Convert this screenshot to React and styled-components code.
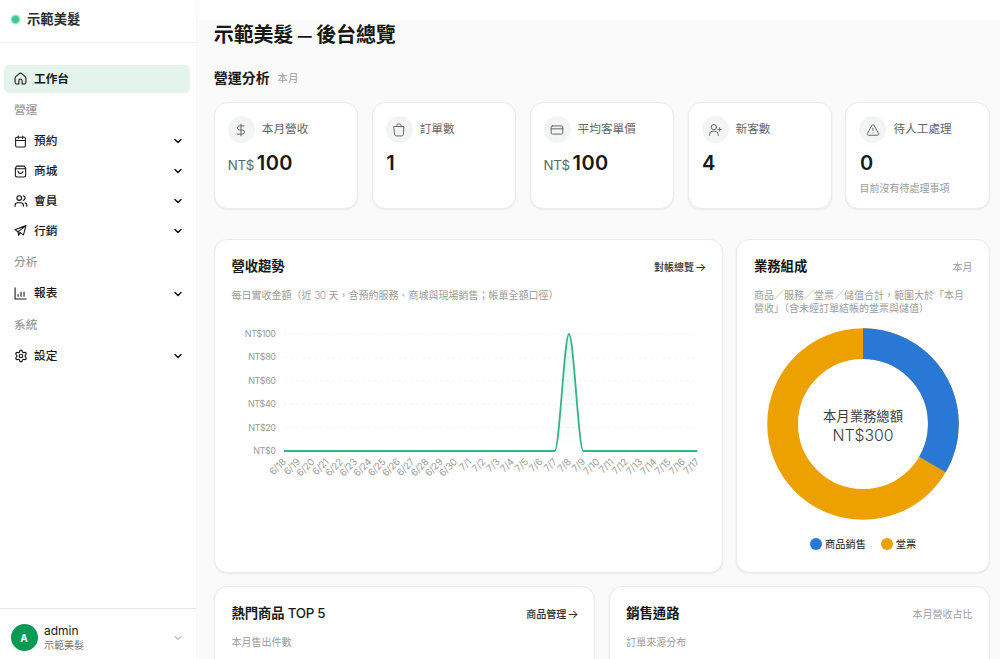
import React from "react";
import styled, { createGlobalStyle } from "styled-components";
import {
  Calendar,
  Users,
  Settings,
  ChevronDown,
  DollarSign,
  CreditCard,
  TriangleAlert,
} from "lucide-react";

const GlobalStyle = createGlobalStyle`
  *, *::before, *::after { box-sizing: border-box; }
  body {
    margin: 0;
    background: #fafafa;
    color: #161817;
    font-family: Inter, "Noto Sans CJK TC", sans-serif;
    font-size: 11.67px;
    line-height: 1.4;
    overflow: hidden;
  }
`;

const Shell = styled.div`
  display: flex;
  height: 659px;
  overflow: hidden;
`;

/* Sidebar */
const Sidebar = styled.aside`
  display: flex;
  flex-direction: column;
  flex: 0 0 197px;
  background: #fff;
  border-right: 1px solid #f8f8f8;
`;

const Brand = styled.div`
  display: flex;
  align-items: center;
  gap: 7px;
  height: 43px;
  padding: 0 0 4px 11px;
  border-bottom: 1px solid #f1f1f1;
  font-size: 13.33px;
  font-weight: 700;
  color: #2a2c2b;
`;

const StatusDot = styled.span`
  width: 9px;
  height: 9px;
  border-radius: 50%;
  background: #41c793;
  border: 1px solid #8be0bd;
  box-shadow: 0 0 0 1.5px #e2f8ee;
`;

const Nav = styled.nav`
  display: flex;
  flex: 1;
  flex-direction: column;
  gap: 1.67px;
  padding: 21.6px 6px 0 4px;
`;

const NavItem = styled.div`
  display: flex;
  align-items: center;
  gap: 7px;
  height: 28.2px;
  padding: 0 6px 0 10px;
  border-radius: 5px;
  background: ${(p) => (p.$active ? "#e4f4ec" : "transparent")};
  font-weight: ${(p) => (p.$active ? 700 : 500)};

  svg {
    flex: none;
  }
`;

const NavIcon = styled.span`
  display: flex;
  align-items: center;
  justify-content: center;
  width: 13px;
`;

const NavLabel = styled.span`
  flex: 1;
`;

const NavGroup = styled.div`
  display: flex;
  align-items: center;
  height: 31.2px;
  padding-left: 10px;
  color: #9a9c9b;
  font-weight: 500;
`;

const Account = styled.div`
  display: flex;
  align-items: center;
  gap: 6.5px;
  height: 51px;
  padding: 7px 12px 0 10.5px;
  border-top: 1px solid #e8e8e8;
`;

const Avatar = styled.span`
  display: grid;
  place-items: center;
  width: 27px;
  height: 27px;
  border-radius: 50%;
  background: #079a55;
  color: #fff;
  font-size: 10px;
  font-weight: 700;
`;

const AccountText = styled.div`
  flex: 1;
  display: flex;
  flex-direction: column;
  line-height: 14px;
  font-size: 12px;

  small {
    font-size: 10px;
    color: #737573;
  }
`;

/* Main column */
const Main = styled.main`
  flex: 1;
  display: flex;
  flex-direction: column;
  min-width: 0;
`;

const TopStrip = styled.div`
  flex: 0 0 20px;
  background: #fff;
`;

const Content = styled.div`
  display: flex;
  flex-direction: column;
  padding: 0 10px 0 16.8px;
`;

const PageTitle = styled.h1`
  margin: 0;
  height: 30px;
  line-height: 30px;
  font-size: 20px;
  font-weight: 700;
  letter-spacing: -0.15px;
`;

const Dash = styled.span`
  font-size: 14px;
  vertical-align: 1px;
`;

const SectionHead = styled.div`
  display: flex;
  align-items: center;
  gap: 7.5px;
  height: 20px;
  margin: 18px 0 14px;

  h2 {
    margin: 0;
    font-size: 14px;
    font-weight: 700;
  }
  span {
    color: #9a9c9b;
    font-size: 10.6px;
    padding-top: 2px;
  }
`;

const Card = styled.section`
  background: #fff;
  border: 1px solid #ebebeb;
  border-radius: 13.33px;
  box-shadow: 0 1px 2px rgba(0, 0, 0, 0.07);
`;

const StatGrid = styled.div`
  display: grid;
  grid-template-columns: repeat(5, 1fr);
  gap: 13.33px;
`;

const StatCard = styled(Card)`
  height: 107px;
  padding: 13px 13px 0;
`;

const StatHead = styled.div`
  display: flex;
  align-items: center;
  gap: 7px;
  height: 27px;
  color: #646665;
`;

const IconBubble = styled.span`
  display: grid;
  place-items: center;
  width: 27px;
  height: 27px;
  border-radius: 50%;
  background: #f3f5f4;
`;

const StatValue = styled.div`
  display: flex;
  align-items: baseline;
  gap: 2.5px;
  height: 28px;
  margin-top: 6px;
  line-height: 28px;
  font-size: 20px;
  font-weight: 600;
  letter-spacing: 0.4px;
  text-indent: 0.5px;

  small {
    color: #646665;
    font-size: 13.33px;
    font-weight: 400;
    letter-spacing: -0.4px;
    text-indent: 0;
  }
`;

const StatNote = styled.div`
  margin-top: 4px;
  color: #9a9c9b;
  font-size: 10px;
  line-height: 14px;
`;

const PanelGrid = styled.div`
  display: grid;
  grid-template-columns: ${(p) => p.$columns};
  gap: 13.33px;
  margin-top: ${(p) => p.$top}px;
`;

const Panel = styled(Card)`
  height: ${(p) => p.$height}px;
  padding: 15px 16.6px 0;
`;

const PanelHead = styled.div`
  display: flex;
  align-items: center;
  justify-content: space-between;
  height: 22px;

  h3 {
    margin: 0;
    font-size: 13.33px;
    font-weight: 700;
  }
`;

const Latin = styled.span`
  font-weight: 500;
  letter-spacing: -0.3px;
`;

const PanelLink = styled.a`
  display: flex;
  align-items: center;
  gap: 1px;
  margin-right: -1px;
  padding-top: 2px;
  color: #2c2e2d;
  font-size: 10px;
  font-weight: 500;
  line-height: 14px;
  white-space: nowrap;

  span {
    font-size: 12px;
    font-weight: 400;
  }
`;

const PanelTag = styled.span`
  padding-top: 2px;
  color: #9a9c9b;
  font-size: 10px;
`;

const PanelText = styled.p`
  margin: 11.67px 0 0;
  color: #9a9c9b;
  font-size: 10px;
  line-height: 13.33px;
`;

const Digits = styled.span`
  letter-spacing: -0.4px;
  font-weight: 300;
`;

const TrendSvg = styled.svg`
  display: block;
  margin-top: 20px;
  width: 474px;
  height: 170px;
  overflow: visible;
  font-size: 9px;
  letter-spacing: -0.45px;
  fill: #9a9c9b;
`;

const DayLabel = styled.text`
  font-size: 9.6px;
  letter-spacing: -0.2px;
`;

const DonutSvg = styled.svg`
  display: block;
  margin: 12px auto 0;
  width: 192px;
  height: 194px;
`;

const Legend = styled.div`
  display: flex;
  justify-content: center;
  gap: 15px;
  margin-top: 15px;
  font-size: 10.2px;
  line-height: 16px;
`;

const LegendItem = styled.span`
  display: flex;
  align-items: center;
  gap: 3px;

  &::before {
    content: "";
    width: 12px;
    height: 12px;
    border-radius: 50%;
    background: ${(p) => p.$color};
  }
`;

/* Icons */
const Stroke = ({ size = 13, width = 2, children }) => (
  <svg
    width={size}
    height={size}
    viewBox="0 0 24 24"
    fill="none"
    stroke="currentColor"
    strokeWidth={width}
    strokeLinecap="round"
    strokeLinejoin="round"
  >
    {children}
  </svg>
);

const HomeIcon = () => (
  <Stroke>
    <path d="M9 22H5a3 3 0 0 1-3-3v-7.600a4 4 0 0 1 1.400-3l6.300-5.400a3.600 3.600 0 0 1 4.600 0l6.300 5.400a4 4 0 0 1 1.400 3V19a3 3 0 0 1-3 3h-4v-6a3 3 0 0 0-6 0z" />
  </Stroke>
);

const StoreBagIcon = () => (
  <Stroke>
    <path d="M5 2h14l2.500 4v13a3 3 0 0 1-3 3h-13a3 3 0 0 1-3-3V6z" />
    <path d="M2.500 7h19" />
    <path d="M7.500 11.500c.5 5.300 8.500 5.300 9 0" />
  </Stroke>
);

const PlaneIcon = () => (
  <Stroke>
    <path d="M22 3 2 10.500l5.500 4L22 3l-4.500 17-7-4.500" />
    <path d="m7.500 14.500 1 6.500 3-5" />
  </Stroke>
);

const ReportIcon = () => (
  <Stroke>
    <path d="M2 1.500V22h20.500" />
    <path d="M7.500 17v-3M13 17V9.500M18.500 17V9.500" />
  </Stroke>
);

const BagIcon = () => (
  <Stroke size={14} width={1.7}>
    <path d="M3.500 6h17l-1 13.500a3 3 0 0 1-3 2.700h-9a3 3 0 0 1-3-2.700z" />
    <path d="M8.500 6V4a2.200 2.200 0 0 1 2.200-2.200h2.600A2.200 2.200 0 0 1 15.500 4v2" />
  </Stroke>
);

const NewClientIcon = () => (
  <Stroke size={14} width={1.7}>
    <circle cx="10" cy="7" r="4.500" />
    <path d="M2.500 21.500v-1.500a6 6 0 0 1 6-6h3a6 6 0 0 1 6 6v1.500" />
    <path d="M20 8v6M17 11h6" />
  </Stroke>
);

/* Data */
const NAV = [
  { label: "工作台", icon: <HomeIcon />, active: true },
  { group: "營運" },
  { label: "預約", icon: <Calendar size={13} /> },
  { label: "商城", icon: <StoreBagIcon /> },
  { label: "會員", icon: <Users size={14} /> },
  { label: "行銷", icon: <PlaneIcon /> },
  { group: "分析" },
  { label: "報表", icon: <ReportIcon /> },
  { group: "系統" },
  { label: "設定", icon: <Settings size={14} /> },
];

const STATS = [
  { label: "本月營收", unit: "NT$", value: "100", icon: <DollarSign size={14} strokeWidth={1.7} /> },
  { label: "訂單數", value: "1", icon: <BagIcon /> },
  { label: "平均客單價", unit: "NT$", value: "100", icon: <CreditCard size={14} strokeWidth={1.7} /> },
  { label: "新客數", value: "4", icon: <NewClientIcon /> },
  { label: "待人工處理", value: "0", note: "目前沒有待處理事項", icon: <TriangleAlert size={14} strokeWidth={1.7} /> },
];

const DAYS = [
  ...Array.from({ length: 13 }, (_, i) => `6/${18 + i}`),
  ...Array.from({ length: 17 }, (_, i) => `7/${1 + i}`),
];

const X0 = 53;
const STEP = 14.25;
const TOP = 12;
const BASE = 129;
const xAt = (i) => X0 + i * STEP;

function TrendChart() {
  const peak = `M${xAt(19)} ${BASE}C${xAt(19) + 4.75} ${BASE} ${xAt(20) - 4.75} ${TOP} ${xAt(20)} ${TOP}S${xAt(21) - 4.75} ${BASE} ${xAt(21)} ${BASE}`;
  return (
    <TrendSvg viewBox="0 0 474 170">
      <defs>
        <linearGradient id="trend" x1="0" x2="0" y1="0" y2="1">
          <stop offset="0" stopColor="#1baf7a" stopOpacity="0.12" />
          <stop offset="1" stopColor="#1baf7a" stopOpacity="0" />
        </linearGradient>
      </defs>
      {[100, 80, 60, 40, 20, 0].map((v, i) => {
        const y = TOP + i * 23.4;
        return (
          <g key={v}>
            <text x="44.500" y={y + 3} textAnchor="end">
              {`NT$${v}`}
            </text>
            {v > 0 && (
              <line x1={X0} x2={xAt(29)} y1={y} y2={y} stroke="#f4f4f4" strokeDasharray="3 3" />
            )}
          </g>
        );
      })}
      <path d={peak} fill="url(#trend)" />
      <path
        d={`M${X0} ${BASE}H${xAt(19)}${peak.replace(/^M[^C]+/, "")}H${xAt(29)}`}
        fill="none"
        stroke="#35b385"
        strokeWidth="1.800"
        strokeLinejoin="round"
      />
      {DAYS.map((d, i) => (
        <DayLabel
          key={d}
          textAnchor="end"
          transform={`translate(${xAt(i) + 2.6} ${BASE + 11.5}) rotate(-45)`}
        >
          {d}
        </DayLabel>
      ))}
    </TrendSvg>
  );
}

function Donut() {
  const r = 80.4;
  const c = 2 * Math.PI * r;
  return (
    <DonutSvg viewBox="0 0 192 194">
      <g fill="none" strokeWidth="30.800" transform="rotate(-90 96 97)">
        <circle cx="96" cy="97" r={r} stroke="#eda100" />
        <circle cx="96" cy="97" r={r} stroke="#2a78d6" strokeDasharray={`${c / 3} ${c}`} />
      </g>
      <g textAnchor="middle" fill="#3c3e3d">
        <text x="96" y="93.500" fontSize="13.330">本月業務總額</text>
        <text x="96" y="113.500" fontSize="16.500" fontWeight="300" textLength="61" lengthAdjust="spacingAndGlyphs">NT$300</text>
      </g>
    </DonutSvg>
  );
}

export default function App() {
  return (
    <>
      <GlobalStyle />
      <Shell>
        <Sidebar>
          <Brand>
            <StatusDot />
            示範美髮
          </Brand>
          <Nav>
            {NAV.map((n) =>
              n.group ? (
                <NavGroup key={n.group}>{n.group}</NavGroup>
              ) : (
                <NavItem key={n.label} $active={n.active}>
                  <NavIcon>{n.icon}</NavIcon>
                  <NavLabel>{n.label}</NavLabel>
                  {!n.active && <ChevronDown size={12} strokeWidth={3} />}
                </NavItem>
              )
            )}
          </Nav>
          <Account>
            <Avatar>A</Avatar>
            <AccountText>
              admin
              <small>示範美髮</small>
            </AccountText>
            <ChevronDown size={12} color="#8a8c8b" />
          </Account>
        </Sidebar>
        <Main>
          <TopStrip />
          <Content>
            <PageTitle>
              示範美髮 <Dash>—</Dash> 後台總覽
            </PageTitle>
            <SectionHead>
              <h2>營運分析</h2>
              <span>本月</span>
            </SectionHead>
            <StatGrid>
              {STATS.map((s) => (
                <StatCard key={s.label}>
                  <StatHead>
                    <IconBubble>{s.icon}</IconBubble>
                    {s.label}
                  </StatHead>
                  <StatValue>
                    {s.unit && <small>{s.unit}</small>}
                    {s.value}
                  </StatValue>
                  {s.note && <StatNote>{s.note}</StatNote>}
                </StatCard>
              ))}
            </StatGrid>
            <PanelGrid $columns="2fr 1fr" $top={30}>
              <Panel $height={334}>
                <PanelHead>
                  <h3>營收趨勢</h3>
                  <PanelLink>對帳總覽 <span>→</span></PanelLink>
                </PanelHead>
                <PanelText>
                  每日實收金額（近 <Digits>30</Digits> 天，含預約服務、商城與現場銷售；帳單全額口徑）
                </PanelText>
                <TrendChart />
              </Panel>
              <Panel $height={334}>
                <PanelHead>
                  <h3>業務組成</h3>
                  <PanelTag>本月</PanelTag>
                </PanelHead>
                <PanelText>商品／服務／堂票／儲值合計，範圍大於「本月營收」（含未經訂單結帳的堂票與儲值）</PanelText>
                <Donut />
                <Legend>
                  <LegendItem $color="#2a78d6">商品銷售</LegendItem>
                  <LegendItem $color="#eda100">堂票</LegendItem>
                </Legend>
              </Panel>
            </PanelGrid>
            <PanelGrid $columns="1fr 1fr" $top={13.33}>
              <Panel $height={200}>
                <PanelHead>
                  <h3>熱門商品 <Latin>TOP 5</Latin></h3>
                  <PanelLink>商品管理 <span>→</span></PanelLink>
                </PanelHead>
                <PanelText>本月售出件數</PanelText>
              </Panel>
              <Panel $height={200}>
                <PanelHead>
                  <h3>銷售通路</h3>
                  <PanelTag>本月營收占比</PanelTag>
                </PanelHead>
                <PanelText>訂單來源分布</PanelText>
              </Panel>
            </PanelGrid>
          </Content>
        </Main>
      </Shell>
    </>
  );
}
